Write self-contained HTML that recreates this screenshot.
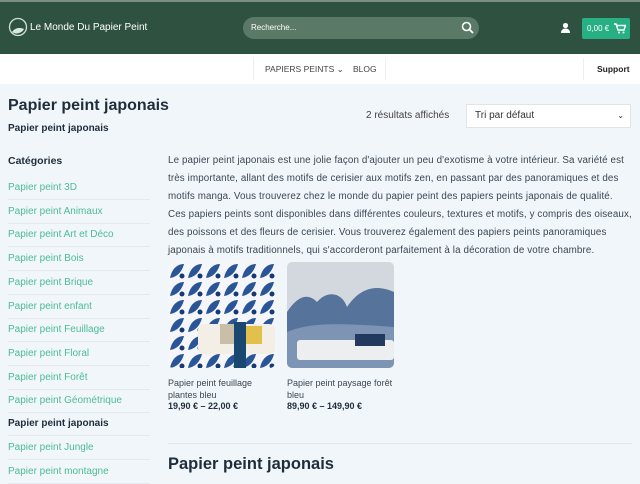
<!DOCTYPE html>
<html><head><meta charset="utf-8"><style>
*{margin:0;padding:0;box-sizing:border-box}
body{width:640px;height:480px;overflow:hidden;background:#f1f6fa;font-family:"Liberation Sans",sans-serif;color:#1f2d3a;position:relative}
.hdr{position:absolute;left:0;top:0;width:640px;height:54px;background:#2f5140;border-top:2px solid #7d8f85}
.nav{position:absolute;left:0;top:54px;width:640px;height:30px;background:#fff}
.abs{position:absolute}
.cat{position:absolute;left:8px;width:142px;font-size:10px;color:#4dbb94;border-bottom:1px solid #e3e9ee;height:24px;line-height:24px}
p.desc{position:absolute;left:168px;top:152px;width:464px;font-size:9.8px;letter-spacing:0.12px;line-height:18px;color:#3a4753}
</style></head><body>
<div class="hdr">
 <svg class="abs" style="left:8px;top:15px" width="20" height="20" viewBox="0 0 20 20"><circle cx="10" cy="10" r="8.5" fill="none" stroke="#cfe0d6" stroke-width="1.3"/><path d="M4 15c3-4 7-5 12-3-2 4-8 6-12 3z" fill="#d8e8de"/></svg>
 <div class="abs" style="left:30px;top:20px;color:#fff;font-size:10px">Le Monde Du Papier Peint</div>
 <div class="abs" style="left:243px;top:15px;width:236px;height:22px;border-radius:11px;background:#5a7a67"></div>
 <div class="abs" style="left:251px;top:21px;color:#fff;font-size:8px">Recherche...</div>
 <svg class="abs" style="left:461px;top:19px" width="13" height="13" viewBox="0 0 13 13"><circle cx="5.5" cy="5.5" r="4" fill="none" stroke="#fff" stroke-width="1.6"/><path d="M8.5 8.5l3.5 3.5" stroke="#fff" stroke-width="1.8"/></svg>
 <svg class="abs" style="left:560px;top:20px" width="11" height="12" viewBox="0 0 11 12"><circle cx="5.5" cy="3.5" r="2.6" fill="#fff"/><path d="M1 11c0-3 2-4.5 4.5-4.5S10 8 10 11z" fill="#fff"/></svg>
 <div class="abs" style="left:582px;top:16px;width:48px;height:21px;background:#27b083;border-radius:2px;color:#fff;font-size:8px;line-height:21px;padding-left:5px">0,00 €</div>
 <svg class="abs" style="left:614px;top:21px" width="12" height="11" viewBox="0 0 12 11"><path d="M0 1h2l2 6h6l1.5-4.5H3" fill="none" stroke="#fff" stroke-width="1.4"/><circle cx="5" cy="9.5" r="1" fill="#fff"/><circle cx="9.5" cy="9.5" r="1" fill="#fff"/></svg>
</div>
<div class="nav">
 <div class="abs" style="left:253px;top:4px;width:1px;height:22px;background:#eee"></div>
 <div class="abs" style="left:265px;top:10px;font-size:8.5px;color:#444">PAPIERS PEINTS ⌄</div>
 <div class="abs" style="left:353px;top:10px;font-size:8.5px;color:#444">BLOG</div>
 <div class="abs" style="left:385px;top:4px;width:1px;height:22px;background:#eee"></div>
 <div class="abs" style="left:583px;top:4px;width:1px;height:22px;background:#eee"></div>
 <div class="abs" style="left:597px;top:10px;font-size:8.5px;color:#222;font-weight:bold">Support</div>
</div>
<div class="abs" style="left:8px;top:97px;font-size:16px;font-weight:bold;color:#1f2d3a">Papier peint japonais</div>
<div class="abs" style="left:8px;top:123px;font-size:10px;font-weight:bold">Papier peint japonais</div>
<div class="abs" style="left:366px;top:110px;font-size:10px;color:#444">2 résultats affichés</div>
<div class="abs" style="left:466px;top:104px;width:165px;height:24px;background:#fff;border:1px solid #e1e5e8;font-size:10px;line-height:22px;padding-left:8px;color:#333">Tri par défaut<span style="position:absolute;right:6px;font-size:8px">⌄</span></div>
<div class="abs" style="left:8px;top:155px;font-size:10.5px;font-weight:bold">Catégories</div>
<div class="cat" style="top:176px">Papier peint 3D</div>
<div class="cat" style="top:200px">Papier peint Animaux</div>
<div class="cat" style="top:223px">Papier peint Art et Déco</div>
<div class="cat" style="top:247px">Papier peint Bois</div>
<div class="cat" style="top:271px">Papier peint Brique</div>
<div class="cat" style="top:295px">Papier peint enfant</div>
<div class="cat" style="top:318px">Papier peint Feuillage</div>
<div class="cat" style="top:342px">Papier peint Floral</div>
<div class="cat" style="top:366px">Papier peint Forêt</div>
<div class="cat" style="top:389px">Papier peint Géométrique</div>
<div class="cat" style="top:412px;color:#1f2d3a;font-weight:bold">Papier peint japonais</div>
<div class="cat" style="top:436px">Papier peint Jungle</div>
<div class="cat" style="top:460px">Papier peint montagne</div>
<p class="desc">Le papier peint japonais est une jolie façon d'ajouter un peu d'exotisme à votre intérieur. Sa variété est<br>très importante, allant des motifs de cerisier aux motifs zen, en passant par des panoramiques et des<br>motifs manga. Vous trouverez chez le monde du papier peint des papiers peints japonais de qualité.<br>Ces papiers peints sont disponibles dans différentes couleurs, textures et motifs, y compris des oiseaux,<br>des poissons et des fleurs de cerisier. Vous trouverez également des papiers peints panoramiques<br>japonais à motifs traditionnels, qui s'accorderont parfaitement à la décoration de votre chambre.</p>
<svg class="abs" style="left:168px;top:262px;border-radius:5px" width="107" height="106" viewBox="0 0 107 106">
 <defs><pattern id="lf" width="18" height="18" patternUnits="userSpaceOnUse"><rect width="18" height="18" fill="#f4f6fa"/><path d="M2 16C4 6 10 2 16 2 14 10 9 15 2 16z" fill="#2a5597"/><circle cx="14" cy="14" r="2.5" fill="#143a75"/></pattern></defs>
 <rect width="107" height="106" fill="url(#lf)"/>
 <rect x="30" y="62" width="77" height="30" rx="6" fill="#f3eee6"/>
 <rect x="68" y="64" width="26" height="18" fill="#e1c04c"/>
 <rect x="52" y="62" width="16" height="20" fill="#c9bea8"/>
 <rect x="66" y="60" width="12" height="46" fill="#1b4870"/>
</svg>
<svg class="abs" style="left:287px;top:262px;border-radius:5px" width="107" height="106" viewBox="0 0 107 106">
 <rect width="107" height="106" fill="#d3d8de"/>
 <path d="M0 50c10-15 20-20 30-10 10-12 25-10 30 5 10-15 25-25 47-15v50H0z" fill="#56739c"/>
 <path d="M0 70c20-8 40-10 107-5v41H0z" fill="#7d94b5"/>
 <rect x="10" y="78" width="97" height="20" rx="3" fill="#eceef0"/>
 <rect x="68" y="72" width="30" height="12" fill="#223a5e"/>
</svg>
<div class="abs" style="left:168px;top:377px;font-size:9px;line-height:12px;color:#3a4753;width:110px">Papier peint feuillage plantes bleu</div>
<div class="abs" style="left:168px;top:401px;font-size:9px;font-weight:bold">19,90 € – 22,00 €</div>
<div class="abs" style="left:287px;top:377px;font-size:9px;line-height:12px;color:#3a4753;width:115px">Papier peint paysage forêt bleu</div>
<div class="abs" style="left:287px;top:401px;font-size:9px;font-weight:bold">89,90 € – 149,90 €</div>
<div class="abs" style="left:168px;top:443px;width:464px;height:1px;background:#e1e6ea"></div>
<div class="abs" style="left:168px;top:455px;font-size:16.5px;font-weight:bold">Papier peint japonais</div>
</body></html>
